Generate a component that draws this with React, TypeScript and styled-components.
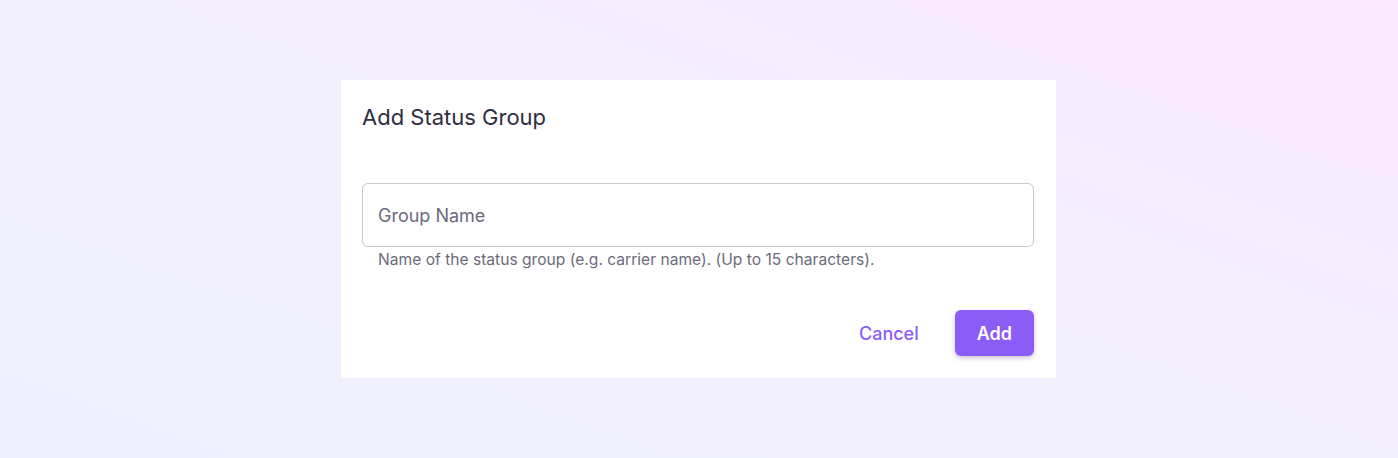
import React, { useState } from "react";
import styled, { createGlobalStyle } from "styled-components";

const ACCENT = "#8b5cf6";

const GlobalStyle = createGlobalStyle`
  html, body {
    margin: 0;
    padding: 0;
    height: 100%;
  }
  body {
    font-family: Inter, "Noto Sans", "Liberation Sans", sans-serif;
    -webkit-font-smoothing: antialiased;
  }
  #root {
    height: 100%;
  }
`;

const Page = styled.div`
  width: 100%;
  height: 100vh;
  box-sizing: border-box;
  padding-right: 1px;
  display: flex;
  align-items: center;
  justify-content: center;
  background: linear-gradient(20deg, #eeeffd 0%, #f2effd 50%, #f9e8fc 100%);
`;

const Dialog = styled.div`
  width: 715px;
  box-sizing: border-box;
  background: #ffffff;
  padding: 21px 22px 22px 21px;
  display: flex;
  flex-direction: column;
`;

const Title = styled.h2`
  margin: 0;
  font-size: 22px;
  line-height: 32px;
  font-weight: 400;
  color: #2f2e3e;
`;

const Field = styled.div`
  margin-top: 50px;
  display: flex;
  flex-direction: column;
`;

const Input = styled.input`
  height: 64px;
  box-sizing: border-box;
  border: 1px solid #c9c8cf;
  border-radius: 6px;
  padding: 0 15px;
  font-family: inherit;
  font-size: 18px;
  color: #2f2e3e;
  outline: none;
  &::placeholder {
    color: #6c6b7c;
  }
`;

const Helper = styled.p`
  margin: 3px 0 0;
  padding-left: 16px;
  font-size: 15.6px;
  line-height: 20px;
  color: #6c6b7a;
`;

const Actions = styled.div`
  margin-top: 40px;
  display: flex;
  justify-content: flex-end;
  align-items: center;
  gap: 36px;
`;

const Button = styled.button<{ $primary?: boolean }>`
  height: 46px;
  border: none;
  border-radius: 6px;
  font-family: inherit;
  font-size: 18px;
  cursor: pointer;
  font-weight: ${({ $primary }) => ($primary ? 600 : 500)};
  color: ${({ $primary }) => ($primary ? "#ffffff" : ACCENT)};
  background: ${({ $primary }) => ($primary ? ACCENT : "transparent")};
  padding: ${({ $primary }) => ($primary ? "0 22px" : "0")};
  min-width: ${({ $primary }) => ($primary ? "78px" : "0")};
  box-shadow: ${({ $primary }) =>
    $primary ? "0 2px 5px rgba(60, 40, 120, 0.28)" : "none"};
`;

export default function App() {
  const [name, setName] = useState("");
  return (
    <>
      <GlobalStyle />
      <Page>
        <Dialog>
          <Title>Add Status Group</Title>
          <Field>
            <Input
              placeholder="Group Name"
              value={name}
              maxLength={15}
              onChange={(e) => setName(e.target.value)}
            />
            <Helper>
              Name of the status group (e.g. carrier name). (Up to 15 characters).
            </Helper>
          </Field>
          <Actions>
            <Button>Cancel</Button>
            <Button $primary>Add</Button>
          </Actions>
        </Dialog>
      </Page>
    </>
  );
}
